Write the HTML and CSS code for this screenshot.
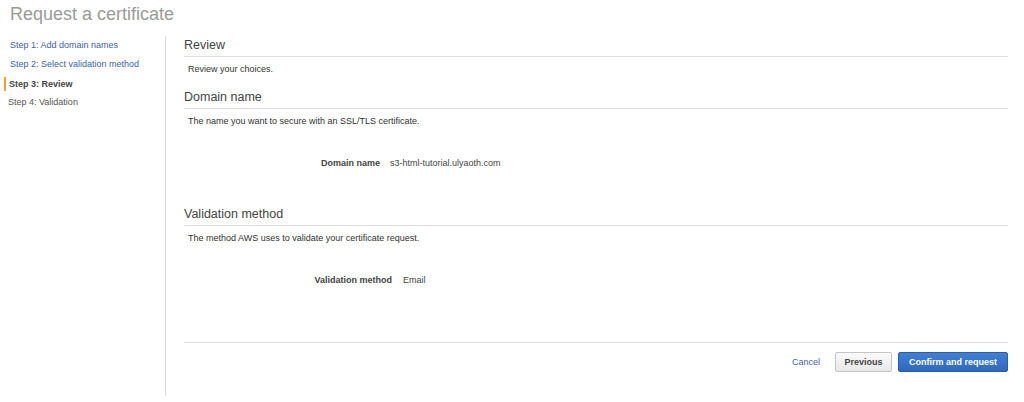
FILE: index.html
```html
<!DOCTYPE html>
<html>
<head>
<meta charset="utf-8">
<link rel="stylesheet" href="styles.css">
</head>
<body>
<h1 class="page-title">Request a certificate</h1>
<div class="wizard">
  <nav class="steps">
    <a class="step link">Step 1: Add domain names</a>
    <a class="step link">Step 2: Select validation method</a>
    <div class="step current">Step 3: Review</div>
    <div class="step future">Step 4: Validation</div>
  </nav>
  <main class="content">
    <h2 class="section-title">Review</h2>
    <p class="desc">Review your choices.</p>
    <h2 class="section-title">Domain name</h2>
    <p class="desc">The name you want to secure with an SSL/TLS certificate.</p>
    <div class="kv kv-domain">
      <span class="kv-label">Domain name</span>
      <span class="kv-value">s3-html-tutorial.ulyaoth.com</span>
    </div>
    <h2 class="section-title">Validation method</h2>
    <p class="desc">The method AWS uses to validate your certificate request.</p>
    <div class="kv kv-method">
      <span class="kv-label">Validation method</span>
      <span class="kv-value">Email</span>
    </div>
    <div class="footer">
      <a class="cancel">Cancel</a>
      <button class="btn btn-secondary">Previous</button>
      <button class="btn btn-primary">Confirm and request</button>
    </div>
  </main>
</div>
</body>
</html>
```
FILE: styles.css
```css
html, body {
  margin: 0;
  padding: 0;
  background: #fff;
  font-family: "Liberation Sans", Arial, sans-serif;
  color: #444;
}
.page-title {
  margin: 0;
  padding: 4px 0 0 10px;
  height: 36px;
  box-sizing: border-box;
  font-size: 18px;
  line-height: 21px;
  font-weight: normal;
  color: #9a9a9a;
}
.wizard {
  display: flex;
  height: 360px;
}
.steps {
  width: 166px;
  flex: none;
  border-right: 1px solid #ddd;
  display: flex;
  flex-direction: column;
  box-sizing: border-box;
}
.step {
  font-size: 9px;
  line-height: 19px;
  padding-left: 10px;
}
.link { color: #4063ad; }
.current {
  color: #444;
  font-weight: bold;
  border-left: 2px solid #f0a030;
  margin: 2.5px 0 2.5px 4px;
  padding-left: 3px;
  line-height: 14px;
}
.future { color: #555; padding-left: 8px; }
.content {
  flex: 1;
  margin: 0 16px 0 18px;
  display: flex;
  flex-direction: column;
}
.section-title {
  margin: 0;
  font-size: 12.5px;
  line-height: 14px;
  font-weight: normal;
  color: #444;
  padding-top: 2px;
  height: 21px;
  box-sizing: border-box;
  border-bottom: 1px solid #ddd;
}
.desc {
  margin: 0;
  padding: 6px 0 0 4px;
  font-size: 9px;
  line-height: 13px;
  color: #333;
  height: 31px;
  box-sizing: border-box;
}
.kv {
  display: flex;
  font-size: 9px;
  line-height: 12px;
  color: #444;
  margin-top: 17px;
}
.kv-label {
  font-weight: bold;
  text-align: right;
  color: #444;
}
.kv-domain { height: 48px; }
.kv-domain .kv-label { width: 196px; }
.kv-method { height: 68px; }
.kv-method .kv-label { width: 208px; }
.kv-value { margin-left: 10px; }
.kv-method .kv-value { margin-left: 11px; }
.footer {
  border-top: 1px solid #ddd;
  display: flex;
  justify-content: flex-end;
  align-items: center;
  padding-top: 9px;
}
.cancel {
  color: #4063ad;
  font-size: 9px;
  margin-right: 15px;
}
.btn {
  font-family: "Liberation Sans", Arial, sans-serif;
  font-size: 9px;
  font-weight: bold;
  height: 20px;
  border-radius: 2px;
  padding: 0 6px;
  box-sizing: border-box;
}
.btn-secondary {
  width: 57px;
  background: linear-gradient(#fafafa, #e8e8e8);
  border: 1px solid #c5c5c5;
  color: #444;
  margin-right: 6px;
}
.btn-primary {
  width: 110px;
  background: linear-gradient(#3f7fd6, #2f69bf);
  border: 1px solid #2a5fa8;
  color: #fff;
}
```
